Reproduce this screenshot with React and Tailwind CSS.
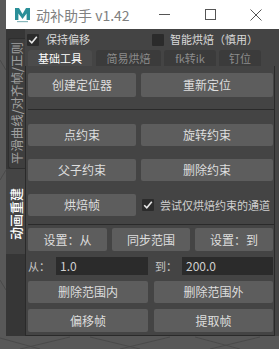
import React from "react";

const F = "font-['Noto_Sans_CJK_SC','Liberation_Sans',sans-serif]";

function Btn({ w, h = 22, children }) {
  return (
    <div
      className={`${F} shrink-0 bg-[#5d5d5d] rounded-[2px] flex items-center justify-center text-[12px] leading-none text-[#dedede]`}
      style={{ width: w, height: h }}
    >
      {children}
    </div>
  );
}

function Check({ checked }) {
  return (
    <div className="w-[12px] h-[12px] bg-[#2b2b2b] rounded-[1px] flex items-center justify-center shrink-0">
      {checked && (
        <svg width="10" height="10" viewBox="0 0 10 10">
          <path d="M1.2 5.2 L3.8 7.8 L8.8 1.8" fill="none" stroke="#e8e8e8" strokeWidth="1.6" />
        </svg>
      )}
    </div>
  );
}

export default function App() {
  return (
    <div className="relative w-[279px] h-[349px] bg-[#585858] overflow-hidden">
      <svg className="absolute inset-0" width="279" height="349">
        <g stroke="#4a4a4a" strokeWidth="1" fill="none">
          <path d="M0 338 L40 349" />
          <path d="M20 349 L70 337" />
          <path d="M90 337 L140 349" />
          <path d="M120 349 L170 337" />
          <path d="M195 337 L240 349" />
          <path d="M210 349 L260 337" />
          <path d="M0 60 L6 70" />
          <path d="M0 180 L6 170" />
          <path d="M0 280 L6 290" />
        </g>
      </svg>
      <div className="relative ml-[6px] w-[273px] h-[336px] flex flex-col">
        {/* Title bar */}
        <div className="h-[29px] bg-white flex items-center shrink-0">
          <svg className="ml-[8px]" width="17" height="16" viewBox="0 0 17 16">
            <path d="M1 1 L5 1 L8.5 7 L12 1 L16 1 L16 13 L12.6 13 L12.6 6.5 L8.5 12 L4.4 6.5 L4.4 13 L1 13 Z" fill="#2a8f98" />
            <rect x="3" y="14" width="11" height="1.2" fill="#8ab8bc" />
          </svg>
          <span className={`${F} ml-[5px] text-[14px] text-[#808080] leading-none`}>动补助手 v1.42</span>
          <div className="flex-1" />
          <div className="w-[46px] h-[29px] flex items-center justify-center">
            <div className="w-[11px] h-[1px] bg-[#555]" />
          </div>
          <div className="w-[46px] h-[29px] flex items-center justify-center">
            <div className="w-[11px] h-[11px] border border-[#555]" />
          </div>
          <div className="w-[46px] h-[29px] flex items-center justify-center">
            <svg width="12" height="12" viewBox="0 0 12 12">
              <path d="M0.5 0.5 L11.5 11.5 M11.5 0.5 L0.5 11.5" stroke="#555" strokeWidth="1" />
            </svg>
          </div>
        </div>
        {/* Body */}
        <div className="flex-1 flex bg-[#444444]">
          {/* Left vertical tabs */}
          <div className="w-[19px] bg-[#363636] flex flex-col pt-[9px] shrink-0">
            <div className="h-[131px] ml-[2px] bg-[#3e3e3e] rounded-tl-[3px] rounded-bl-[3px] border-l border-t border-b border-[#2e2e2e] flex items-center justify-center">
              <span className={`${F} [writing-mode:vertical-rl] [text-orientation:sideways] rotate-180 text-[12.5px] leading-none text-[#a0a0a0] whitespace-nowrap`}>
                平滑曲线/对齐帧/正则
              </span>
            </div>
            <div className="h-[85px] bg-[#444444] flex items-center justify-center pt-[6px]">
              <span className={`${F} [writing-mode:vertical-rl] [text-orientation:sideways] rotate-180 text-[13px] font-medium leading-none text-white whitespace-nowrap`}>
                动画重建
              </span>
            </div>
          </div>
          {/* Right column */}
          <div className="flex-1 flex flex-col">
            <div className="h-[21px] flex items-center shrink-0">
              <div className="ml-[2px]"><Check checked /></div>
              <span className={`${F} ml-[7px] text-[11px] leading-none text-[#d8d8d8]`}>保持偏移</span>
              <div className="ml-[62px]"><Check /></div>
              <span className={`${F} ml-[6px] text-[11px] leading-none text-[#d8d8d8]`}>智能烘焙（慎用）</span>
            </div>
            <div className="h-[16px] flex items-end pl-[3px] gap-[3px] shrink-0">
              <div className={`${F} w-[64px] h-[16px] bg-[#4b4b4b] rounded-t-[3px] flex items-center justify-center text-[11px] leading-none text-white`}>基础工具</div>
              <div className={`${F} ml-[1px] w-[65px] h-[16px] bg-[#3b3b3b] rounded-t-[3px] flex items-center justify-center text-[11px] leading-none text-[#8c8c8c]`}>简易烘焙</div>
              <div className={`${F} w-[52px] h-[16px] bg-[#3b3b3b] rounded-t-[3px] flex items-center justify-center text-[11px] leading-none text-[#8c8c8c]`}>fk转ik</div>
              <div className={`${F} w-[42px] h-[16px] bg-[#3b3b3b] rounded-t-[3px] flex items-center justify-center text-[11px] leading-none text-[#8c8c8c]`}>钉位</div>
            </div>
            <div className="flex-1 flex flex-col border-l border-b border-r border-[#2a2a2a] w-[250px] bg-[#444444]">
              <div className="flex pl-[2px] gap-[5px] mt-[7px]">
                <Btn w={108} h={24}>创建定位器</Btn>
                <Btn w={132} h={24}>重新定位</Btn>
              </div>
              <div className="mt-[12px] ml-[2px] border-t border-b border-[#2a2a2a] flex flex-col pt-[14px] pb-[8px] gap-[13px]">
                <div className="flex gap-[5px]">
                  <Btn w={108}>点约束</Btn>
                  <Btn w={132}>旋转约束</Btn>
                </div>
                <div className="flex gap-[5px]">
                  <Btn w={108}>父子约束</Btn>
                  <Btn w={132}>删除约束</Btn>
                </div>
                <div className="flex items-center">
                  <Btn w={108}>烘焙帧</Btn>
                  <div className="ml-[6px]"><Check checked /></div>
                  <span className={`${F} ml-[6px] text-[11px] leading-none text-[#d0d0d0] whitespace-nowrap`}>尝试仅烘焙约束的通道</span>
                </div>
              </div>
              <div className="flex pl-[2px] gap-[5px] mt-[3px]">
                <Btn w={79} h={23}>设置：从</Btn>
                <Btn w={78} h={23}>同步范围</Btn>
                <Btn w={78} h={23}>设置：到</Btn>
              </div>
              <div className="flex items-center pl-[2px] mt-[6px] h-[18px]">
                <span className={`${F} w-[28px] text-[11px] leading-none text-[#c8c8c8]`}>从：</span>
                <div className={`${F} w-[92px] h-[18px] bg-[#2b2b2b] flex items-center pl-[4px] text-[12px] leading-none text-[#d0d0d0]`}>1.0</div>
                <span className={`${F} ml-[7px] w-[27px] text-[11px] leading-none text-[#c8c8c8]`}>到：</span>
                <div className={`${F} w-[91px] h-[18px] bg-[#2b2b2b] flex items-center pl-[4px] text-[12px] leading-none text-[#d0d0d0]`}>200.0</div>
              </div>
              <div className="flex pl-[2px] gap-[6px] mt-[6px]">
                <Btn w={120}>删除范围内</Btn>
                <Btn w={119}>删除范围外</Btn>
              </div>
              <div className="flex pl-[2px] gap-[6px] mt-[6px]">
                <Btn w={120} h={23}>偏移帧</Btn>
                <Btn w={119} h={23}>提取帧</Btn>
              </div>
            </div>
          </div>
        </div>
      </div>
    </div>
  );
}
